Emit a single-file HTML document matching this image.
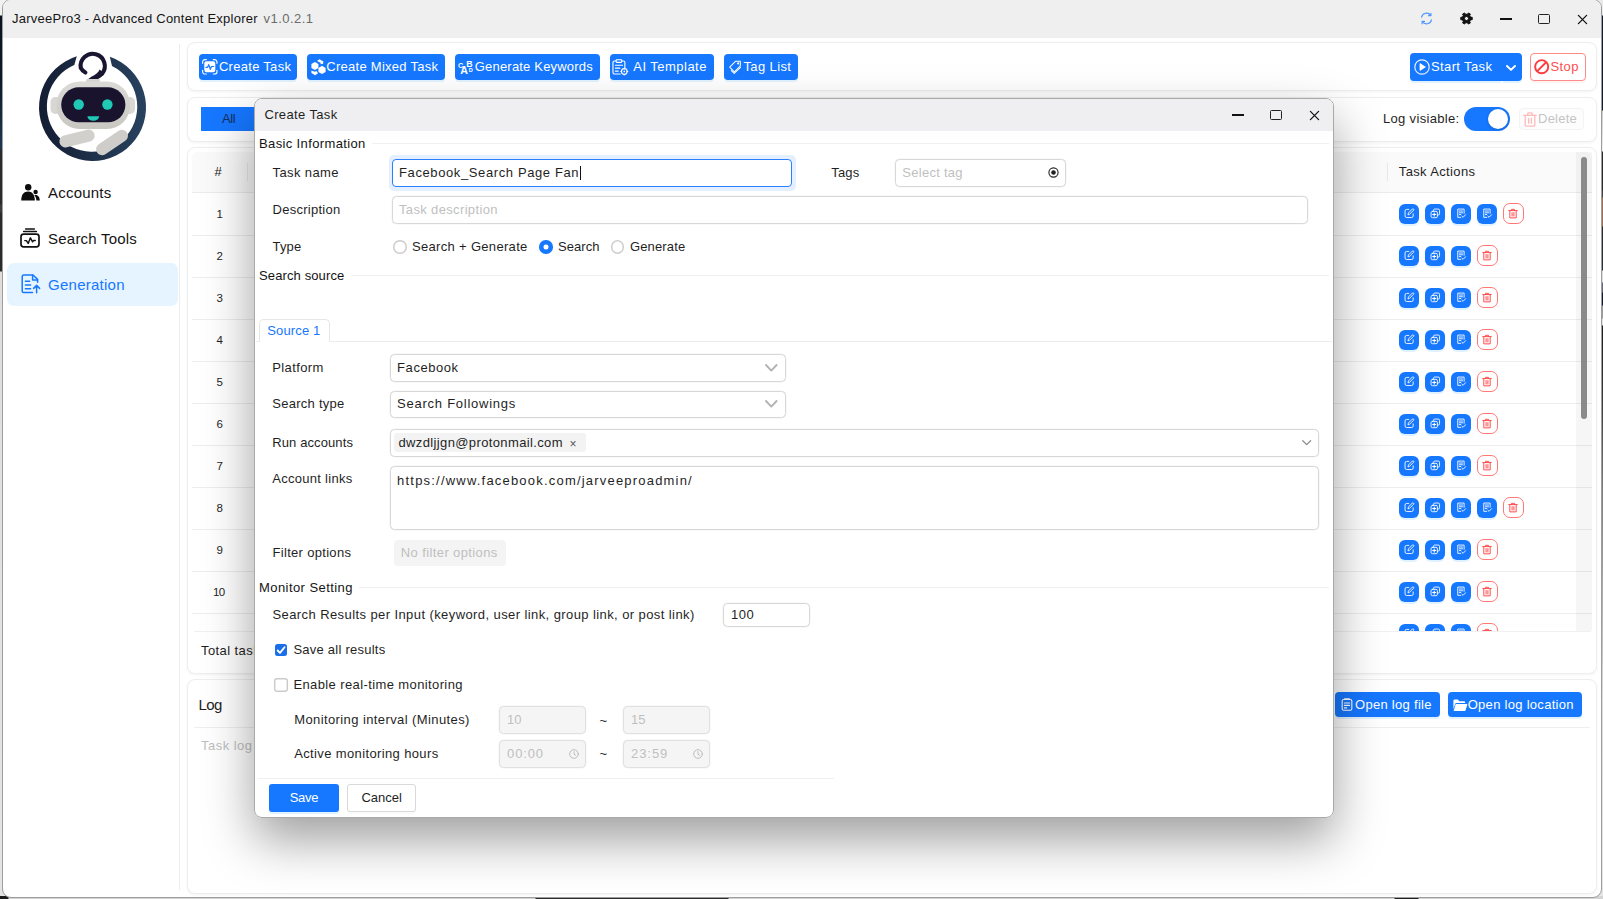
<!DOCTYPE html>
<html lang="en">
<head>
<meta charset="utf-8">
<title>JarveePro3 - Advanced Content Explorer</title>
<style>
*{box-sizing:border-box;margin:0;padding:0}
html,body{width:1603px;height:899px;overflow:hidden;background:#e4e4e4}
body{position:relative;font-family:"Liberation Sans",sans-serif;font-size:13px;color:#1f1f1f}
.a{position:absolute}
.t{position:absolute;white-space:nowrap;line-height:16px}
svg{position:absolute;overflow:visible}
.panel{position:absolute;background:#fff;border:1px solid #eeeeee;border-radius:8px;box-shadow:0 1px 3px rgba(0,0,0,.05)}
.btn{position:absolute;border-radius:4px;background:#1677ff;box-shadow:0 2px 0 rgba(5,145,255,.12)}
.ib{position:absolute;width:20px;height:20px;border-radius:6px;background:#1677ff;box-shadow:0 2px 0 rgba(5,145,255,.12)}
.ibd{position:absolute;width:21px;height:21px;border-radius:7px;background:#fff;border:1px solid #ff7875}
.ln{position:absolute;height:1px;background:#f0f0f0}
.inp{position:absolute;border:1px solid #d8d8d8;border-radius:4.5px;background:#fff;box-shadow:0 0 0 .5px rgba(0,0,0,.05)}
.dis{background:#f5f5f5;border-color:#e0e0e0}
</style>
</head>
<body>
<div class="a" style="left:0;top:0;width:6px;height:899px;background:linear-gradient(#f1f1f1 0,#f1f1f1 15px,#0a131f 16px,#0d1a2b 80px,#1d3852 148px,#2b2b2b 150px,#2b2b2b 204px,#3c3c3c 205px,#3c3c3c 212px,#2b2b2b 213px,#2b2b2b 271px,#dedede 272px,#e4e4e4 899px)">
</div>
<div class="a" style="left:1597px;top:0;width:6px;height:899px;background:linear-gradient(#e8e8e8 0,#e8e8e8 15px,#131b2a 16px,#131b2a 110px,#c8c8c8 111px,#f2f2f2 151px,#2b2b2b 152px,#2b2b2b 190px,#444 191px,#444 197px,#9c6d57 198px,#9c6d57 226px,#2b2b2b 227px,#2a3038 270px,#dcdcdc 271px,#dcdcdc 282px,#666677 283px,#666677 292px,#15152a 293px,#15152a 305px,#999 306px,#999 318px,#e0e0e0 319px,#e0e0e0 325px,#1e1e1e 326px,#3a3a3a 400px,#777 480px,#dcdcdc 700px,#e6e6e6 899px)">
</div>
<div class="a" style="left:0;top:896px;width:1603px;height:3px;background:linear-gradient(90deg,#1c1c1c 0,#1c1c1c 8px,#d4d4d4 9px,#d4d4d4 535px,#2a2a2a 536px,#2a2a2a 728px,#d4d4d4 729px,#d4d4d4 1394px,#222 1395px,#222 1418px,#d4d4d4 1419px,#d4d4d4 1603px)">
</div>
<div class="a" style="left:2px;top:-1px;width:1600px;height:899px;background:#fff;border:1px solid #9d9d9d;border-radius:9px;overflow:hidden">
<div class="a" style="left:0;top:0;width:1600px;height:38px;background:#efefef">
</div>
</div>
<svg style="left:1420px;top:12px" width="13" height="13" viewBox="0 0 13 13" fill="none" stroke="#4d97ff" stroke-width="1.15" stroke-linecap="round" stroke-linejoin="round">
<path d="M1.6 5.2A5 5 0 0 1 10.6 3.3"/>
<path d="M11.4 7.8A5 5 0 0 1 2.4 9.7"/>
<path d="M10.9 1.2V3.6H8.5"/>
<path d="M2.1 11.8V9.4H4.5"/>
</svg>
<svg style="left:1460.3px;top:12.2px" width="13" height="13" viewBox="0 0 13 13">
<path d="M10.57,5.11L12.28,5.33L12.28,7.67L10.57,7.89L9.74,9.33L10.41,10.92L8.38,12.09L7.33,10.72L5.67,10.72L4.62,12.09L2.59,10.92L3.26,9.33L2.43,7.89L0.72,7.67L0.72,5.33L2.43,5.11L3.26,3.67L2.59,2.08L4.62,0.91L5.67,2.28L7.33,2.28L8.38,0.91L10.41,2.08L9.74,3.67Z M8.5 6.5A2 2 0 1 0 4.5 6.5A2 2 0 1 0 8.5 6.5Z" fill="#111" fill-rule="evenodd" stroke="#111" stroke-width=".9" stroke-linejoin="round"/>
</svg>
<div class="a" style="left:1500px;top:18px;width:12px;height:2px;background:#111">
</div>
<div class="a" style="left:1538.3px;top:14.4px;width:11.6px;height:9.4px;border:1.4px solid #222;border-radius:1.5px">
</div>
<svg style="left:1577.5px;top:14.7px" width="9" height="9" viewBox="0 0 9 9" stroke="#111" stroke-width="1.3" stroke-linecap="round">
<path d="M.4.4L8.6 8.6M8.6.4L.4 8.6"/>
</svg>
<div class="a" style="left:179px;top:44px;width:1px;height:846px;background:#ededed">
</div>
<div class="a" style="left:7px;top:263px;width:171px;height:43px;border-radius:7px;background:#e6f4ff">
</div>
<svg style="left:30px;top:45px" width="125" height="125" viewBox="0 0 125 125">
<defs>
<linearGradient id="rg" x1="0" x2="1" y1="0" y2="0">
<stop offset="0" stop-color="#131d33"/>
<stop offset="1" stop-color="#28425f"/>
</linearGradient>
<linearGradient id="hg" x1="0" x2="0" y1="0" y2="1">
<stop offset="0" stop-color="#dcdad6"/>
<stop offset="1" stop-color="#c9c7c2"/>
</linearGradient>
</defs>
<path d="M46.8 11.3A53.5 53.5 0 1 0 79.8 11.8L82 21A45.2 45.2 0 1 1 44.3 20Z" fill="url(#rg)"/>
<path d="M55.4 27.5Q52.3 25.8 50.8 23.05A12.1 12.1 0 1 1 71.97 28.73" fill="none" stroke="#1a1530" stroke-width="4.1" stroke-linecap="round"/>
<path d="M69.6 24.6C67.5 29.5 63 30.5 58.3 33.9L68 34C70.5 32.8 73 31 74.4 28.8Z" fill="#1a1530"/>
<rect x="56.2" y="33.9" width="13.6" height="5" rx="1" fill="#d5d3cf"/>
<rect x="20.5" y="52" width="11" height="17" rx="5" fill="#d9d7d3"/>
<rect x="94" y="52" width="11" height="17" rx="5" fill="#d9d7d3"/>
<rect x="26.5" y="36.5" width="73.5" height="47.5" rx="23" fill="url(#hg)"/>
<rect x="31.2" y="42.3" width="64.2" height="35" rx="17.5" fill="#19132e"/>
<circle cx="48.7" cy="59.5" r="5.2" fill="#1fc9b5"/>
<circle cx="77.4" cy="59.5" r="5.2" fill="#1fc9b5"/>
<path d="M57.4 71.2H69.2A5.9 4.6 0 0 1 57.4 71.2Z" fill="#1fc9b5"/>
<rect x="29" y="87.5" width="36" height="12" rx="6" fill="#d2d0cc" transform="rotate(-14 47 93.5)"/>
<rect x="64" y="91.5" width="36" height="12" rx="6" fill="#cfcdc9" transform="rotate(-34 82 97.5)"/>
</svg>
<svg style="left:20.5px;top:183.5px" width="19" height="17" viewBox="0 0 19 17" fill="#0d0d0d">
<circle cx="7.2" cy="3.3" r="3.2"/>
<path d="M0.2 16.6C0.2 10.8 2.8 7.6 7.2 7.6C11.2 7.6 13.6 10.6 13.9 16.6Z"/>
<circle cx="14.6" cy="8" r="2.2"/>
<path d="M13.2 11.2C16.6 10.2 18.7 12.6 18.8 16.6H15.4C15.3 14.2 14.6 12.4 13.2 11.2Z"/>
</svg>
<svg style="left:20px;top:228px" width="20" height="20" viewBox="0 0 20 20" fill="none" stroke="#111" stroke-linecap="round" stroke-linejoin="round">
<path d="M5.6 1H14.4" stroke-width="1.5"/>
<path d="M3.6 3.5H16.4" stroke-width="1.5"/>
<rect x="1" y="6.1" width="18" height="12.8" rx="2.6" stroke-width="1.7"/>
<path d="M4.8 12.6H6.4L8.2 15.4L10.4 9.8L12.6 13.8L13.6 12.4H15.2" stroke-width="1.45"/>
</svg>
<svg style="left:20.5px;top:274.2px" width="20" height="20" viewBox="0 0 20 20" fill="none" stroke="#1677ff" stroke-width="1.5" stroke-linecap="round" stroke-linejoin="round">
<path d="M11.5 18.6H2.6A1.4 1.4 0 0 1 1.2 17.2V2.4A1.4 1.4 0 0 1 2.6 1H12L16.6 5.4V8.2"/>
<path d="M11.6 1.2V6H16.4"/>
<path d="M4.4 7.2H8.6M4.4 11H9.6M4.4 14.8H9.6"/>
<path d="M15.6 18.8V11.6M12.6 14.4L15.6 11.4L18.6 14.4"/>
</svg>
<div class="panel" style="left:187px;top:42px;width:1410px;height:49px">
</div>
<div class="btn" style="left:199px;top:54px;width:98px;height:26px">
</div>
<div class="btn" style="left:307px;top:54px;width:138px;height:26px">
</div>
<div class="btn" style="left:455px;top:54px;width:145px;height:26px">
</div>
<div class="btn" style="left:610px;top:54px;width:104px;height:26px">
</div>
<div class="btn" style="left:724px;top:54px;width:74px;height:26px">
</div>
<svg style="left:202.2px;top:59px" width="15.6" height="15.6" viewBox="0 0 15 15" stroke="#fff" fill="none" stroke-linecap="round" stroke-linejoin="round" stroke-width="1.1">
<rect x="2.2" y="2.2" width="10.6" height="10.6" rx="2.2" fill="#fff" stroke="none"/>
<path d="M.6 4.2V2.8A2.2 2.2 0 0 1 2.8.6H4.2M10.8.6H12.2A2.2 2.2 0 0 1 14.4 2.8V4.2M14.4 10.8V12.2A2.2 2.2 0 0 1 12.2 14.4H10.8M4.2 14.4H2.8A2.2 2.2 0 0 1 .6 12.2V10.8"/>
<path d="M3.8 8H5.4L6.5 5.4L8 10L9.1 7.2H11.2" stroke="#1677ff" stroke-width="1.15"/>
</svg>
<svg style="left:310.5px;top:58.8px" width="15" height="17" viewBox="0 0 15 17" fill="#fff">
<path d="M3.9 3L7.4 5V9.1L3.9 11.1L.4 9.1V5Z"/>
<path d="M11 6.8L14.6 8.9V13L11 15.1L7.4 13V8.9Z"/>
<path d="M6.05 2L8.5.26L12.4 2.43L12.1 4.74L9.95 5.17L9.37 3.87Z"/>
<path d="M.41 11.38L3.88 12.83L5.47 12.1L7.06 14.27L4.17 16.15L.41 13.98Z"/>
</svg>
<svg style="left:457.4px;top:58px" width="17" height="18" viewBox="0 0 17 18" fill="#fff" font-family="Liberation Sans, sans-serif" font-weight="bold">
<text x="1" y="10.2" font-size="7.2">C</text>
<text x="9.2" y="9" font-size="8.8">B</text>
<text x="3.2" y="16" font-size="10.6">A</text>
<text x="11.8" y="14.2" font-size="5.6">D</text>
</svg>
<svg style="left:612.4px;top:58.8px" width="16.6" height="16.6" viewBox="0 0 17 17" fill="none" stroke="#fff" stroke-width="1.15" stroke-linecap="round" stroke-linejoin="round">
<path d="M8.4 15.4H2.6A1.6 1.6 0 0 1 1 13.8V3.6A1.6 1.6 0 0 1 2.6 2H4.2M10 2H11.6A1.6 1.6 0 0 1 13.2 3.6V8.6"/>
<rect x="4.2" y=".8" width="5.8" height="2.6" rx=".8"/>
<path d="M3.4 6.4H10.8M3.4 9.4H8M3.4 12.4H6.4"/>
<circle cx="12.6" cy="12.8" r="2.9"/>
<circle cx="12.6" cy="12.8" r=".9" fill="#fff" stroke="none"/>
<path d="M12.6 9.2V9.9M12.6 15.7V16.4M9 12.8H9.7M15.5 12.8H16.2"/>
</svg>
<svg style="left:729px;top:59.6px" width="12.6" height="14.4" viewBox="0 0 14 15" fill="none" stroke="#fff" stroke-width="1.15" stroke-linecap="round" stroke-linejoin="round">
<path d="M7.4.8H12.6V6L6 12.6L.8 7.4Z"/>
<circle cx="10.2" cy="3.3" r=".6" fill="#fff"/>
<path d="M2.6 11.2L5.8 14.4L12.8 7.6"/>
</svg>
<div class="btn" style="left:1410px;top:53px;width:112px;height:28px">
</div>
<div class="a" style="left:1500.5px;top:81px;width:2px;height:2px;background:#fff">
</div>
<svg style="left:1414.2px;top:59.2px" width="16" height="16" viewBox="0 0 16 16" fill="none" stroke="#fff" stroke-width="1.2">
<circle cx="8" cy="8" r="7.2" stroke-opacity=".9"/>
<rect x="3.4" y="3.4" width="9.2" height="9.2" rx="2.6" stroke="none"/>
<path d="M6 4.6L11.4 8L6 11.4Z" fill="#fff" stroke="#fff" stroke-linejoin="round" stroke-width=".8"/>
</svg>
<svg style="left:1506.2px;top:64.6px" width="10" height="6" viewBox="0 0 10 6" fill="none" stroke="#fff" stroke-width="2" stroke-linecap="round" stroke-linejoin="round">
<path d="M1 1L5 4.9L9 1"/>
</svg>
<div class="a" style="left:1530.4px;top:53.3px;width:55.4px;height:27.4px;border:1px solid #ff8a8a;border-radius:4px;background:#fff;box-shadow:0 2px 0 rgba(255,38,5,.05)">
</div>
<svg style="left:1534px;top:59.2px" width="15.4" height="15.4" viewBox="0 0 16 16" fill="none" stroke="#ff3b3f" stroke-width="2">
<circle cx="8" cy="8" r="6.8"/>
<path d="M3.4 12.6L12.6 3.4"/>
</svg>
<div class="panel" style="left:187px;top:96.5px;width:1410px;height:45px">
</div>
<div class="a" style="left:201px;top:107px;width:70px;height:24px;background:#1677ff">
</div>
<div class="a" style="left:1464px;top:107px;width:46px;height:24px;border-radius:12px;background:#1677ff">
</div>
<div class="a" style="left:1487.8px;top:108.8px;width:20.4px;height:20.4px;border-radius:50%;background:#fff;box-shadow:0 1px 3px rgba(0,35,11,.2)">
</div>
<div class="a" style="left:1518.5px;top:108px;width:65.5px;height:22px;border:1px solid #f3f3f3;border-radius:4px;background:#fdfdfd">
</div>
<svg style="left:1523.3px;top:111.5px" width="14" height="15" viewBox="0 0 14 15" fill="none" stroke="#ffb9ba" stroke-width="1.3" stroke-linecap="round" stroke-linejoin="round">
<path d="M.8 3.4H13.2M4.8 3.2V1.6A.8.8 0 0 1 5.6.8H8.4A.8.8 0 0 1 9.2 1.6V3.2M2.2 3.6V13A1.2 1.2 0 0 0 3.4 14.2H10.6A1.2 1.2 0 0 0 11.8 13V3.6M5.6 6.4V11.2M8.4 6.4V11.2"/>
</svg>
<div class="panel" style="left:187px;top:146.5px;width:1410px;height:527px">
</div>
<div class="a" style="left:192px;top:152px;width:1400px;height:479px;overflow:hidden">
<div class="a" style="left:0;top:0;width:1400px;height:41px;background:#fafafa;border-bottom:1px solid #ececec;border-radius:6px 6px 0 0">
</div>
<div class="a" style="left:55px;top:11px;width:1px;height:18px;background:#e9e9e9">
</div>
<div class="a" style="left:1194.5px;top:11px;width:1px;height:18px;background:#e9e9e9">
</div>
<div class="ln" style="left:0;top:82.5px;width:1400px;background:#ededed">
</div>
<div class="ib" style="left:1207px;top:51.5px">
<svg style="left:4.7px;top:4.7px" width="10.6" height="10.6" viewBox="0 0 12 12" fill="none" stroke="#fff" stroke-width="1" stroke-linecap="round" stroke-linejoin="round">
<path d="M5.4 1.6H3A1.8 1.8 0 0 0 1.2 3.4V9A1.8 1.8 0 0 0 3 10.8H8.6A1.8 1.8 0 0 0 10.4 9V6.6"/>
<path d="M4.6 7.4L5 5.6L9.4 1.2A.9.9 0 0 1 10.8 2.6L6.4 7Z"/>
</svg>
</div>
<div class="ib" style="left:1233px;top:51.5px">
<svg style="left:4.7px;top:4.7px" width="10.6" height="10.6" viewBox="0 0 12 12" fill="none" stroke="#fff" stroke-width="1" stroke-linecap="round" stroke-linejoin="round">
<path d="M4 3.4V2.6A1.4 1.4 0 0 1 5.4 1.2H9.4A1.4 1.4 0 0 1 10.8 2.6V6.6A1.4 1.4 0 0 1 9.4 8H8.8"/>
<rect x="1.2" y="3.8" width="7.2" height="7.2" rx="1.6"/>
<path d="M4.8 5.6V9.2M3 7.4H6.6" stroke-width="1.2"/>
</svg>
</div>
<div class="ib" style="left:1259px;top:51.5px">
<svg style="left:4.9px;top:4.7px" width="10.6" height="10.6" viewBox="0 0 12 12" fill="none" stroke="#fff" stroke-width="1" stroke-linecap="round" stroke-linejoin="round">
<path d="M5.4 10.6H2V1.2H9.2V6"/>
<path d="M3.8 3.4H7.4M3.8 5.4H7.4M3.8 7.4H5.4"/>
<path d="M6.6 9.2L8 10.6L10.8 7.6"/>
</svg>
</div>
<div class="ib" style="left:1285px;top:51.5px">
<svg style="left:4.9px;top:4.7px" width="10.6" height="10.6" viewBox="0 0 12 12" fill="none" stroke="#fff" stroke-width="1" stroke-linecap="round" stroke-linejoin="round">
<path d="M5.4 10.6H2V1.2H9.2V6"/>
<path d="M3.8 3.4H7.4M3.8 5.4H7.4M3.8 7.4H5.4"/>
<path d="M6.6 9.2L8 10.6L10.8 7.6"/>
</svg>
</div>
<div class="ibd" style="left:1310.5px;top:51.0px">
<svg style="left:4.7px;top:4.2px" width="10" height="11" viewBox="0 0 11 12" fill="none" stroke="#ff4d4f" stroke-width="1.1" stroke-linecap="round" stroke-linejoin="round">
<path d="M.8 2.8H10.2M3.8 2.6V1.4H7.2V2.6M2 3V10.8H9V3"/>
<path d="M4.5 5V8.8M6.5 5V8.8"/>
</svg>
</div>
<div class="ln" style="left:0;top:124.5px;width:1400px;background:#ededed">
</div>
<div class="ib" style="left:1207px;top:93.5px">
<svg style="left:4.7px;top:4.7px" width="10.6" height="10.6" viewBox="0 0 12 12" fill="none" stroke="#fff" stroke-width="1" stroke-linecap="round" stroke-linejoin="round">
<path d="M5.4 1.6H3A1.8 1.8 0 0 0 1.2 3.4V9A1.8 1.8 0 0 0 3 10.8H8.6A1.8 1.8 0 0 0 10.4 9V6.6"/>
<path d="M4.6 7.4L5 5.6L9.4 1.2A.9.9 0 0 1 10.8 2.6L6.4 7Z"/>
</svg>
</div>
<div class="ib" style="left:1233px;top:93.5px">
<svg style="left:4.7px;top:4.7px" width="10.6" height="10.6" viewBox="0 0 12 12" fill="none" stroke="#fff" stroke-width="1" stroke-linecap="round" stroke-linejoin="round">
<path d="M4 3.4V2.6A1.4 1.4 0 0 1 5.4 1.2H9.4A1.4 1.4 0 0 1 10.8 2.6V6.6A1.4 1.4 0 0 1 9.4 8H8.8"/>
<rect x="1.2" y="3.8" width="7.2" height="7.2" rx="1.6"/>
<path d="M4.8 5.6V9.2M3 7.4H6.6" stroke-width="1.2"/>
</svg>
</div>
<div class="ib" style="left:1259px;top:93.5px">
<svg style="left:4.9px;top:4.7px" width="10.6" height="10.6" viewBox="0 0 12 12" fill="none" stroke="#fff" stroke-width="1" stroke-linecap="round" stroke-linejoin="round">
<path d="M5.4 10.6H2V1.2H9.2V6"/>
<path d="M3.8 3.4H7.4M3.8 5.4H7.4M3.8 7.4H5.4"/>
<path d="M6.6 9.2L8 10.6L10.8 7.6"/>
</svg>
</div>
<div class="ibd" style="left:1284.5px;top:93.0px">
<svg style="left:4.7px;top:4.2px" width="10" height="11" viewBox="0 0 11 12" fill="none" stroke="#ff4d4f" stroke-width="1.1" stroke-linecap="round" stroke-linejoin="round">
<path d="M.8 2.8H10.2M3.8 2.6V1.4H7.2V2.6M2 3V10.8H9V3"/>
<path d="M4.5 5V8.8M6.5 5V8.8"/>
</svg>
</div>
<div class="ln" style="left:0;top:166.5px;width:1400px;background:#ededed">
</div>
<div class="ib" style="left:1207px;top:135.5px">
<svg style="left:4.7px;top:4.7px" width="10.6" height="10.6" viewBox="0 0 12 12" fill="none" stroke="#fff" stroke-width="1" stroke-linecap="round" stroke-linejoin="round">
<path d="M5.4 1.6H3A1.8 1.8 0 0 0 1.2 3.4V9A1.8 1.8 0 0 0 3 10.8H8.6A1.8 1.8 0 0 0 10.4 9V6.6"/>
<path d="M4.6 7.4L5 5.6L9.4 1.2A.9.9 0 0 1 10.8 2.6L6.4 7Z"/>
</svg>
</div>
<div class="ib" style="left:1233px;top:135.5px">
<svg style="left:4.7px;top:4.7px" width="10.6" height="10.6" viewBox="0 0 12 12" fill="none" stroke="#fff" stroke-width="1" stroke-linecap="round" stroke-linejoin="round">
<path d="M4 3.4V2.6A1.4 1.4 0 0 1 5.4 1.2H9.4A1.4 1.4 0 0 1 10.8 2.6V6.6A1.4 1.4 0 0 1 9.4 8H8.8"/>
<rect x="1.2" y="3.8" width="7.2" height="7.2" rx="1.6"/>
<path d="M4.8 5.6V9.2M3 7.4H6.6" stroke-width="1.2"/>
</svg>
</div>
<div class="ib" style="left:1259px;top:135.5px">
<svg style="left:4.9px;top:4.7px" width="10.6" height="10.6" viewBox="0 0 12 12" fill="none" stroke="#fff" stroke-width="1" stroke-linecap="round" stroke-linejoin="round">
<path d="M5.4 10.6H2V1.2H9.2V6"/>
<path d="M3.8 3.4H7.4M3.8 5.4H7.4M3.8 7.4H5.4"/>
<path d="M6.6 9.2L8 10.6L10.8 7.6"/>
</svg>
</div>
<div class="ibd" style="left:1284.5px;top:135.0px">
<svg style="left:4.7px;top:4.2px" width="10" height="11" viewBox="0 0 11 12" fill="none" stroke="#ff4d4f" stroke-width="1.1" stroke-linecap="round" stroke-linejoin="round">
<path d="M.8 2.8H10.2M3.8 2.6V1.4H7.2V2.6M2 3V10.8H9V3"/>
<path d="M4.5 5V8.8M6.5 5V8.8"/>
</svg>
</div>
<div class="ln" style="left:0;top:208.5px;width:1400px;background:#ededed">
</div>
<div class="ib" style="left:1207px;top:177.5px">
<svg style="left:4.7px;top:4.7px" width="10.6" height="10.6" viewBox="0 0 12 12" fill="none" stroke="#fff" stroke-width="1" stroke-linecap="round" stroke-linejoin="round">
<path d="M5.4 1.6H3A1.8 1.8 0 0 0 1.2 3.4V9A1.8 1.8 0 0 0 3 10.8H8.6A1.8 1.8 0 0 0 10.4 9V6.6"/>
<path d="M4.6 7.4L5 5.6L9.4 1.2A.9.9 0 0 1 10.8 2.6L6.4 7Z"/>
</svg>
</div>
<div class="ib" style="left:1233px;top:177.5px">
<svg style="left:4.7px;top:4.7px" width="10.6" height="10.6" viewBox="0 0 12 12" fill="none" stroke="#fff" stroke-width="1" stroke-linecap="round" stroke-linejoin="round">
<path d="M4 3.4V2.6A1.4 1.4 0 0 1 5.4 1.2H9.4A1.4 1.4 0 0 1 10.8 2.6V6.6A1.4 1.4 0 0 1 9.4 8H8.8"/>
<rect x="1.2" y="3.8" width="7.2" height="7.2" rx="1.6"/>
<path d="M4.8 5.6V9.2M3 7.4H6.6" stroke-width="1.2"/>
</svg>
</div>
<div class="ib" style="left:1259px;top:177.5px">
<svg style="left:4.9px;top:4.7px" width="10.6" height="10.6" viewBox="0 0 12 12" fill="none" stroke="#fff" stroke-width="1" stroke-linecap="round" stroke-linejoin="round">
<path d="M5.4 10.6H2V1.2H9.2V6"/>
<path d="M3.8 3.4H7.4M3.8 5.4H7.4M3.8 7.4H5.4"/>
<path d="M6.6 9.2L8 10.6L10.8 7.6"/>
</svg>
</div>
<div class="ibd" style="left:1284.5px;top:177.0px">
<svg style="left:4.7px;top:4.2px" width="10" height="11" viewBox="0 0 11 12" fill="none" stroke="#ff4d4f" stroke-width="1.1" stroke-linecap="round" stroke-linejoin="round">
<path d="M.8 2.8H10.2M3.8 2.6V1.4H7.2V2.6M2 3V10.8H9V3"/>
<path d="M4.5 5V8.8M6.5 5V8.8"/>
</svg>
</div>
<div class="ln" style="left:0;top:250.5px;width:1400px;background:#ededed">
</div>
<div class="ib" style="left:1207px;top:219.5px">
<svg style="left:4.7px;top:4.7px" width="10.6" height="10.6" viewBox="0 0 12 12" fill="none" stroke="#fff" stroke-width="1" stroke-linecap="round" stroke-linejoin="round">
<path d="M5.4 1.6H3A1.8 1.8 0 0 0 1.2 3.4V9A1.8 1.8 0 0 0 3 10.8H8.6A1.8 1.8 0 0 0 10.4 9V6.6"/>
<path d="M4.6 7.4L5 5.6L9.4 1.2A.9.9 0 0 1 10.8 2.6L6.4 7Z"/>
</svg>
</div>
<div class="ib" style="left:1233px;top:219.5px">
<svg style="left:4.7px;top:4.7px" width="10.6" height="10.6" viewBox="0 0 12 12" fill="none" stroke="#fff" stroke-width="1" stroke-linecap="round" stroke-linejoin="round">
<path d="M4 3.4V2.6A1.4 1.4 0 0 1 5.4 1.2H9.4A1.4 1.4 0 0 1 10.8 2.6V6.6A1.4 1.4 0 0 1 9.4 8H8.8"/>
<rect x="1.2" y="3.8" width="7.2" height="7.2" rx="1.6"/>
<path d="M4.8 5.6V9.2M3 7.4H6.6" stroke-width="1.2"/>
</svg>
</div>
<div class="ib" style="left:1259px;top:219.5px">
<svg style="left:4.9px;top:4.7px" width="10.6" height="10.6" viewBox="0 0 12 12" fill="none" stroke="#fff" stroke-width="1" stroke-linecap="round" stroke-linejoin="round">
<path d="M5.4 10.6H2V1.2H9.2V6"/>
<path d="M3.8 3.4H7.4M3.8 5.4H7.4M3.8 7.4H5.4"/>
<path d="M6.6 9.2L8 10.6L10.8 7.6"/>
</svg>
</div>
<div class="ibd" style="left:1284.5px;top:219.0px">
<svg style="left:4.7px;top:4.2px" width="10" height="11" viewBox="0 0 11 12" fill="none" stroke="#ff4d4f" stroke-width="1.1" stroke-linecap="round" stroke-linejoin="round">
<path d="M.8 2.8H10.2M3.8 2.6V1.4H7.2V2.6M2 3V10.8H9V3"/>
<path d="M4.5 5V8.8M6.5 5V8.8"/>
</svg>
</div>
<div class="ln" style="left:0;top:292.5px;width:1400px;background:#ededed">
</div>
<div class="ib" style="left:1207px;top:261.5px">
<svg style="left:4.7px;top:4.7px" width="10.6" height="10.6" viewBox="0 0 12 12" fill="none" stroke="#fff" stroke-width="1" stroke-linecap="round" stroke-linejoin="round">
<path d="M5.4 1.6H3A1.8 1.8 0 0 0 1.2 3.4V9A1.8 1.8 0 0 0 3 10.8H8.6A1.8 1.8 0 0 0 10.4 9V6.6"/>
<path d="M4.6 7.4L5 5.6L9.4 1.2A.9.9 0 0 1 10.8 2.6L6.4 7Z"/>
</svg>
</div>
<div class="ib" style="left:1233px;top:261.5px">
<svg style="left:4.7px;top:4.7px" width="10.6" height="10.6" viewBox="0 0 12 12" fill="none" stroke="#fff" stroke-width="1" stroke-linecap="round" stroke-linejoin="round">
<path d="M4 3.4V2.6A1.4 1.4 0 0 1 5.4 1.2H9.4A1.4 1.4 0 0 1 10.8 2.6V6.6A1.4 1.4 0 0 1 9.4 8H8.8"/>
<rect x="1.2" y="3.8" width="7.2" height="7.2" rx="1.6"/>
<path d="M4.8 5.6V9.2M3 7.4H6.6" stroke-width="1.2"/>
</svg>
</div>
<div class="ib" style="left:1259px;top:261.5px">
<svg style="left:4.9px;top:4.7px" width="10.6" height="10.6" viewBox="0 0 12 12" fill="none" stroke="#fff" stroke-width="1" stroke-linecap="round" stroke-linejoin="round">
<path d="M5.4 10.6H2V1.2H9.2V6"/>
<path d="M3.8 3.4H7.4M3.8 5.4H7.4M3.8 7.4H5.4"/>
<path d="M6.6 9.2L8 10.6L10.8 7.6"/>
</svg>
</div>
<div class="ibd" style="left:1284.5px;top:261.0px">
<svg style="left:4.7px;top:4.2px" width="10" height="11" viewBox="0 0 11 12" fill="none" stroke="#ff4d4f" stroke-width="1.1" stroke-linecap="round" stroke-linejoin="round">
<path d="M.8 2.8H10.2M3.8 2.6V1.4H7.2V2.6M2 3V10.8H9V3"/>
<path d="M4.5 5V8.8M6.5 5V8.8"/>
</svg>
</div>
<div class="ln" style="left:0;top:334.5px;width:1400px;background:#ededed">
</div>
<div class="ib" style="left:1207px;top:303.5px">
<svg style="left:4.7px;top:4.7px" width="10.6" height="10.6" viewBox="0 0 12 12" fill="none" stroke="#fff" stroke-width="1" stroke-linecap="round" stroke-linejoin="round">
<path d="M5.4 1.6H3A1.8 1.8 0 0 0 1.2 3.4V9A1.8 1.8 0 0 0 3 10.8H8.6A1.8 1.8 0 0 0 10.4 9V6.6"/>
<path d="M4.6 7.4L5 5.6L9.4 1.2A.9.9 0 0 1 10.8 2.6L6.4 7Z"/>
</svg>
</div>
<div class="ib" style="left:1233px;top:303.5px">
<svg style="left:4.7px;top:4.7px" width="10.6" height="10.6" viewBox="0 0 12 12" fill="none" stroke="#fff" stroke-width="1" stroke-linecap="round" stroke-linejoin="round">
<path d="M4 3.4V2.6A1.4 1.4 0 0 1 5.4 1.2H9.4A1.4 1.4 0 0 1 10.8 2.6V6.6A1.4 1.4 0 0 1 9.4 8H8.8"/>
<rect x="1.2" y="3.8" width="7.2" height="7.2" rx="1.6"/>
<path d="M4.8 5.6V9.2M3 7.4H6.6" stroke-width="1.2"/>
</svg>
</div>
<div class="ib" style="left:1259px;top:303.5px">
<svg style="left:4.9px;top:4.7px" width="10.6" height="10.6" viewBox="0 0 12 12" fill="none" stroke="#fff" stroke-width="1" stroke-linecap="round" stroke-linejoin="round">
<path d="M5.4 10.6H2V1.2H9.2V6"/>
<path d="M3.8 3.4H7.4M3.8 5.4H7.4M3.8 7.4H5.4"/>
<path d="M6.6 9.2L8 10.6L10.8 7.6"/>
</svg>
</div>
<div class="ibd" style="left:1284.5px;top:303.0px">
<svg style="left:4.7px;top:4.2px" width="10" height="11" viewBox="0 0 11 12" fill="none" stroke="#ff4d4f" stroke-width="1.1" stroke-linecap="round" stroke-linejoin="round">
<path d="M.8 2.8H10.2M3.8 2.6V1.4H7.2V2.6M2 3V10.8H9V3"/>
<path d="M4.5 5V8.8M6.5 5V8.8"/>
</svg>
</div>
<div class="ln" style="left:0;top:376.5px;width:1400px;background:#ededed">
</div>
<div class="ib" style="left:1207px;top:345.5px">
<svg style="left:4.7px;top:4.7px" width="10.6" height="10.6" viewBox="0 0 12 12" fill="none" stroke="#fff" stroke-width="1" stroke-linecap="round" stroke-linejoin="round">
<path d="M5.4 1.6H3A1.8 1.8 0 0 0 1.2 3.4V9A1.8 1.8 0 0 0 3 10.8H8.6A1.8 1.8 0 0 0 10.4 9V6.6"/>
<path d="M4.6 7.4L5 5.6L9.4 1.2A.9.9 0 0 1 10.8 2.6L6.4 7Z"/>
</svg>
</div>
<div class="ib" style="left:1233px;top:345.5px">
<svg style="left:4.7px;top:4.7px" width="10.6" height="10.6" viewBox="0 0 12 12" fill="none" stroke="#fff" stroke-width="1" stroke-linecap="round" stroke-linejoin="round">
<path d="M4 3.4V2.6A1.4 1.4 0 0 1 5.4 1.2H9.4A1.4 1.4 0 0 1 10.8 2.6V6.6A1.4 1.4 0 0 1 9.4 8H8.8"/>
<rect x="1.2" y="3.8" width="7.2" height="7.2" rx="1.6"/>
<path d="M4.8 5.6V9.2M3 7.4H6.6" stroke-width="1.2"/>
</svg>
</div>
<div class="ib" style="left:1259px;top:345.5px">
<svg style="left:4.9px;top:4.7px" width="10.6" height="10.6" viewBox="0 0 12 12" fill="none" stroke="#fff" stroke-width="1" stroke-linecap="round" stroke-linejoin="round">
<path d="M5.4 10.6H2V1.2H9.2V6"/>
<path d="M3.8 3.4H7.4M3.8 5.4H7.4M3.8 7.4H5.4"/>
<path d="M6.6 9.2L8 10.6L10.8 7.6"/>
</svg>
</div>
<div class="ib" style="left:1285px;top:345.5px">
<svg style="left:4.9px;top:4.7px" width="10.6" height="10.6" viewBox="0 0 12 12" fill="none" stroke="#fff" stroke-width="1" stroke-linecap="round" stroke-linejoin="round">
<path d="M5.4 10.6H2V1.2H9.2V6"/>
<path d="M3.8 3.4H7.4M3.8 5.4H7.4M3.8 7.4H5.4"/>
<path d="M6.6 9.2L8 10.6L10.8 7.6"/>
</svg>
</div>
<div class="ibd" style="left:1310.5px;top:345.0px">
<svg style="left:4.7px;top:4.2px" width="10" height="11" viewBox="0 0 11 12" fill="none" stroke="#ff4d4f" stroke-width="1.1" stroke-linecap="round" stroke-linejoin="round">
<path d="M.8 2.8H10.2M3.8 2.6V1.4H7.2V2.6M2 3V10.8H9V3"/>
<path d="M4.5 5V8.8M6.5 5V8.8"/>
</svg>
</div>
<div class="ln" style="left:0;top:418.5px;width:1400px;background:#ededed">
</div>
<div class="ib" style="left:1207px;top:387.5px">
<svg style="left:4.7px;top:4.7px" width="10.6" height="10.6" viewBox="0 0 12 12" fill="none" stroke="#fff" stroke-width="1" stroke-linecap="round" stroke-linejoin="round">
<path d="M5.4 1.6H3A1.8 1.8 0 0 0 1.2 3.4V9A1.8 1.8 0 0 0 3 10.8H8.6A1.8 1.8 0 0 0 10.4 9V6.6"/>
<path d="M4.6 7.4L5 5.6L9.4 1.2A.9.9 0 0 1 10.8 2.6L6.4 7Z"/>
</svg>
</div>
<div class="ib" style="left:1233px;top:387.5px">
<svg style="left:4.7px;top:4.7px" width="10.6" height="10.6" viewBox="0 0 12 12" fill="none" stroke="#fff" stroke-width="1" stroke-linecap="round" stroke-linejoin="round">
<path d="M4 3.4V2.6A1.4 1.4 0 0 1 5.4 1.2H9.4A1.4 1.4 0 0 1 10.8 2.6V6.6A1.4 1.4 0 0 1 9.4 8H8.8"/>
<rect x="1.2" y="3.8" width="7.2" height="7.2" rx="1.6"/>
<path d="M4.8 5.6V9.2M3 7.4H6.6" stroke-width="1.2"/>
</svg>
</div>
<div class="ib" style="left:1259px;top:387.5px">
<svg style="left:4.9px;top:4.7px" width="10.6" height="10.6" viewBox="0 0 12 12" fill="none" stroke="#fff" stroke-width="1" stroke-linecap="round" stroke-linejoin="round">
<path d="M5.4 10.6H2V1.2H9.2V6"/>
<path d="M3.8 3.4H7.4M3.8 5.4H7.4M3.8 7.4H5.4"/>
<path d="M6.6 9.2L8 10.6L10.8 7.6"/>
</svg>
</div>
<div class="ibd" style="left:1284.5px;top:387.0px">
<svg style="left:4.7px;top:4.2px" width="10" height="11" viewBox="0 0 11 12" fill="none" stroke="#ff4d4f" stroke-width="1.1" stroke-linecap="round" stroke-linejoin="round">
<path d="M.8 2.8H10.2M3.8 2.6V1.4H7.2V2.6M2 3V10.8H9V3"/>
<path d="M4.5 5V8.8M6.5 5V8.8"/>
</svg>
</div>
<div class="ln" style="left:0;top:460.5px;width:1400px;background:#ededed">
</div>
<div class="ib" style="left:1207px;top:429.5px">
<svg style="left:4.7px;top:4.7px" width="10.6" height="10.6" viewBox="0 0 12 12" fill="none" stroke="#fff" stroke-width="1" stroke-linecap="round" stroke-linejoin="round">
<path d="M5.4 1.6H3A1.8 1.8 0 0 0 1.2 3.4V9A1.8 1.8 0 0 0 3 10.8H8.6A1.8 1.8 0 0 0 10.4 9V6.6"/>
<path d="M4.6 7.4L5 5.6L9.4 1.2A.9.9 0 0 1 10.8 2.6L6.4 7Z"/>
</svg>
</div>
<div class="ib" style="left:1233px;top:429.5px">
<svg style="left:4.7px;top:4.7px" width="10.6" height="10.6" viewBox="0 0 12 12" fill="none" stroke="#fff" stroke-width="1" stroke-linecap="round" stroke-linejoin="round">
<path d="M4 3.4V2.6A1.4 1.4 0 0 1 5.4 1.2H9.4A1.4 1.4 0 0 1 10.8 2.6V6.6A1.4 1.4 0 0 1 9.4 8H8.8"/>
<rect x="1.2" y="3.8" width="7.2" height="7.2" rx="1.6"/>
<path d="M4.8 5.6V9.2M3 7.4H6.6" stroke-width="1.2"/>
</svg>
</div>
<div class="ib" style="left:1259px;top:429.5px">
<svg style="left:4.9px;top:4.7px" width="10.6" height="10.6" viewBox="0 0 12 12" fill="none" stroke="#fff" stroke-width="1" stroke-linecap="round" stroke-linejoin="round">
<path d="M5.4 10.6H2V1.2H9.2V6"/>
<path d="M3.8 3.4H7.4M3.8 5.4H7.4M3.8 7.4H5.4"/>
<path d="M6.6 9.2L8 10.6L10.8 7.6"/>
</svg>
</div>
<div class="ibd" style="left:1284.5px;top:429.0px">
<svg style="left:4.7px;top:4.2px" width="10" height="11" viewBox="0 0 11 12" fill="none" stroke="#ff4d4f" stroke-width="1.1" stroke-linecap="round" stroke-linejoin="round">
<path d="M.8 2.8H10.2M3.8 2.6V1.4H7.2V2.6M2 3V10.8H9V3"/>
<path d="M4.5 5V8.8M6.5 5V8.8"/>
</svg>
</div>
<div class="ln" style="left:0;top:502.5px;width:1400px;background:#ededed">
</div>
<div class="ib" style="left:1207px;top:471.5px">
<svg style="left:4.7px;top:4.7px" width="10.6" height="10.6" viewBox="0 0 12 12" fill="none" stroke="#fff" stroke-width="1" stroke-linecap="round" stroke-linejoin="round">
<path d="M5.4 1.6H3A1.8 1.8 0 0 0 1.2 3.4V9A1.8 1.8 0 0 0 3 10.8H8.6A1.8 1.8 0 0 0 10.4 9V6.6"/>
<path d="M4.6 7.4L5 5.6L9.4 1.2A.9.9 0 0 1 10.8 2.6L6.4 7Z"/>
</svg>
</div>
<div class="ib" style="left:1233px;top:471.5px">
<svg style="left:4.7px;top:4.7px" width="10.6" height="10.6" viewBox="0 0 12 12" fill="none" stroke="#fff" stroke-width="1" stroke-linecap="round" stroke-linejoin="round">
<path d="M4 3.4V2.6A1.4 1.4 0 0 1 5.4 1.2H9.4A1.4 1.4 0 0 1 10.8 2.6V6.6A1.4 1.4 0 0 1 9.4 8H8.8"/>
<rect x="1.2" y="3.8" width="7.2" height="7.2" rx="1.6"/>
<path d="M4.8 5.6V9.2M3 7.4H6.6" stroke-width="1.2"/>
</svg>
</div>
<div class="ib" style="left:1259px;top:471.5px">
<svg style="left:4.9px;top:4.7px" width="10.6" height="10.6" viewBox="0 0 12 12" fill="none" stroke="#fff" stroke-width="1" stroke-linecap="round" stroke-linejoin="round">
<path d="M5.4 10.6H2V1.2H9.2V6"/>
<path d="M3.8 3.4H7.4M3.8 5.4H7.4M3.8 7.4H5.4"/>
<path d="M6.6 9.2L8 10.6L10.8 7.6"/>
</svg>
</div>
<div class="ibd" style="left:1284.5px;top:471.0px">
<svg style="left:4.7px;top:4.2px" width="10" height="11" viewBox="0 0 11 12" fill="none" stroke="#ff4d4f" stroke-width="1.1" stroke-linecap="round" stroke-linejoin="round">
<path d="M.8 2.8H10.2M3.8 2.6V1.4H7.2V2.6M2 3V10.8H9V3"/>
<path d="M4.5 5V8.8M6.5 5V8.8"/>
</svg>
</div>
<div class="a" style="left:1384px;top:0;width:16px;height:479px;background:rgba(0,0,0,.035)">
</div>
<div class="a" style="left:1388.7px;top:4.5px;width:6.2px;height:262px;border-radius:3px;background:#8a8a8a">
</div>
</div>
<div class="ln" style="left:194px;top:631px;width:1397px;background:#f0f0f0">
</div>
<div class="panel" style="left:187px;top:678.5px;width:1410px;height:215px">
</div>
<div class="ln" style="left:194px;top:726.5px;width:1396px;background:#efefef">
</div>
<div class="btn" style="left:1335px;top:691.5px;width:105px;height:25px">
</div>
<div class="btn" style="left:1448px;top:691.5px;width:134px;height:25px">
</div>
<svg style="left:1341px;top:698px" width="12" height="13" viewBox="0 0 12 14" fill="none" stroke="#fff" stroke-width="1.2" stroke-linecap="round" stroke-linejoin="round">
<rect x=".8" y="1.6" width="10.4" height="11.6" rx="1.6"/>
<path d="M3.4.8H8.6M3.2 5.4H8.8M3.2 8H8.8M3.2 10.6H5.6"/>
</svg>
<svg style="left:1452.5px;top:698.5px" width="14.5" height="12.6" viewBox="0 0 15 13" fill="#fff">
<path d="M.4 2A1.4 1.4 0 0 1 1.8.6H5L6.6 2.2H11.4A1.2 1.2 0 0 1 12.6 3.4V4.2H3.6A1.6 1.6 0 0 0 2.1 5.3L.4 10.6Z"/>
<path d="M3.2 5.2H14.2A.6.6 0 0 1 14.8 6L12.9 11.8A1 1 0 0 1 12 12.5H1.2A.5.5 0 0 1 .8 11.8L2.6 5.7A.7.7 0 0 1 3.2 5.2Z"/>
</svg>
<div class="t" style="left:12.0px;top:10.8px;font-size:13px;color:#141414;letter-spacing:0.25px;">JarveePro3 - Advanced Content Explorer</div>
<div class="t" style="left:263.5px;top:10.8px;font-size:13px;color:#6b6b6b;letter-spacing:0.46px;">v1.0.2.1</div>
<div class="t" style="left:48.1px;top:185.3px;font-size:15px;color:#141414;letter-spacing:0.20px;">Accounts</div>
<div class="t" style="left:48.1px;top:231.3px;font-size:15px;color:#141414;letter-spacing:0.21px;">Search Tools</div>
<div class="t" style="left:48.1px;top:277.3px;font-size:15px;color:#1677ff;letter-spacing:0.24px;">Generation</div>
<div class="t" style="left:218.9px;top:59.3px;font-size:13px;color:#fff;letter-spacing:0.29px;">Create Task</div>
<div class="t" style="left:326.3px;top:59.3px;font-size:13px;color:#fff;letter-spacing:0.27px;">Create Mixed Task</div>
<div class="t" style="left:474.8px;top:59.3px;font-size:13px;color:#fff;letter-spacing:0.19px;">Generate Keywords</div>
<div class="t" style="left:633.3px;top:59.3px;font-size:13px;color:#fff;letter-spacing:0.47px;">AI Template</div>
<div class="t" style="left:743.5px;top:59.3px;font-size:13px;color:#fff;letter-spacing:0.37px;">Tag List</div>
<div class="t" style="left:1431.0px;top:59.3px;font-size:13px;color:#fff;letter-spacing:0.38px;">Start Task</div>
<div class="t" style="left:1550.5px;top:59.3px;font-size:13px;color:#ff4d4f;letter-spacing:0.42px;">Stop</div>
<div class="t" style="left:221.9px;top:110.9px;font-size:13px;color:#14315c;letter-spacing:-0.38px;">All</div>
<div class="t" style="left:1383.0px;top:111.0px;font-size:13px;color:#1f1f1f;letter-spacing:0.33px;">Log visiable:</div>
<div class="t" style="left:1538.0px;top:111.0px;font-size:13px;color:#c4c4c4;letter-spacing:0.24px;">Delete</div>
<div class="t" style="left:214.5px;top:164.0px;font-size:13px;color:#1f1f1f;letter-spacing:0.00px;">#</div>
<div class="t" style="left:1398.8px;top:164.0px;font-size:13px;color:#1f1f1f;letter-spacing:0.36px;">Task Actions</div>
<div class="t" style="left:201.0px;top:642.6px;font-size:13px;color:#1f1f1f;letter-spacing:0.42px;">Total tasks: 10</div>
<div class="t" style="left:198.4px;top:697.3px;font-size:15px;color:#1f1f1f;letter-spacing:-0.60px;">Log</div>
<div class="t" style="left:201.0px;top:738.0px;font-size:13px;color:#bfbfbf;letter-spacing:0.47px;">Task log</div>
<div class="t" style="left:1355.0px;top:697.0px;font-size:13px;color:#fff;letter-spacing:0.29px;">Open log file</div>
<div class="t" style="left:1467.7px;top:697.0px;font-size:13px;color:#fff;letter-spacing:0.29px;">Open log location</div>
<div class="t" style="left:216.5px;top:205.9px;font-size:11.5px;color:#1f1f1f;letter-spacing:0.00px;">1</div>
<div class="t" style="left:216.5px;top:247.9px;font-size:11.5px;color:#1f1f1f;letter-spacing:0.00px;">2</div>
<div class="t" style="left:216.5px;top:289.9px;font-size:11.5px;color:#1f1f1f;letter-spacing:0.00px;">3</div>
<div class="t" style="left:216.5px;top:331.9px;font-size:11.5px;color:#1f1f1f;letter-spacing:0.00px;">4</div>
<div class="t" style="left:216.5px;top:373.9px;font-size:11.5px;color:#1f1f1f;letter-spacing:0.00px;">5</div>
<div class="t" style="left:216.5px;top:415.9px;font-size:11.5px;color:#1f1f1f;letter-spacing:0.00px;">6</div>
<div class="t" style="left:216.5px;top:457.9px;font-size:11.5px;color:#1f1f1f;letter-spacing:0.00px;">7</div>
<div class="t" style="left:216.5px;top:499.9px;font-size:11.5px;color:#1f1f1f;letter-spacing:0.00px;">8</div>
<div class="t" style="left:216.5px;top:541.9px;font-size:11.5px;color:#1f1f1f;letter-spacing:0.00px;">9</div>
<div class="t" style="left:213.0px;top:583.9px;font-size:11.5px;color:#1f1f1f;letter-spacing:-0.60px;">10</div>
<div class="a" style="left:254px;top:98px;width:1080px;height:720px;border-radius:8px;box-shadow:0 22px 50px 0 rgba(0,0,0,.38)">
</div>
<div class="a" style="left:254px;top:98px;width:1080px;height:720px;border-radius:8px;background:#fff;border:1px solid #a9a9a9;overflow:hidden">
<div class="a" style="left:0;top:0;width:1078px;height:32px;background:#efeff1">
</div>
</div>
<div class="a" style="left:1231.6px;top:113.5px;width:12.4px;height:2px;background:#111">
</div>
<div class="a" style="left:1270.4px;top:110.4px;width:11.2px;height:9.2px;border:1.4px solid #222;border-radius:1.5px">
</div>
<svg style="left:1309.5px;top:110.6px" width="9" height="9" viewBox="0 0 9 9" stroke="#111" stroke-width="1.25" stroke-linecap="round">
<path d="M.4.4L8.6 8.6M8.6.4L.4 8.6"/>
</svg>
<div class="ln" style="left:372px;top:143px;width:957px;background:#f0f0f0">
</div>
<div class="ln" style="left:351px;top:275px;width:978px;background:#f0f0f0">
</div>
<div class="ln" style="left:359px;top:587px;width:970px;background:#f0f0f0">
</div>
<div class="ln" style="left:258px;top:778px;width:576px;background:#f0f0f0">
</div>
<div class="a" style="left:388.5px;top:155px;width:407px;height:35.5px;border-radius:5px;background:#e4efff">
</div>
<div class="a" style="left:392px;top:159px;width:400px;height:27.8px;border:1.4px solid #2a7fff;border-radius:4px;background:#fff">
</div>
<div class="a" style="left:580.3px;top:165.5px;width:1px;height:14.5px;background:#111">
</div>
<div class="inp" style="left:894.7px;top:159.0px;width:171.1px;height:27.8px">
</div>
<svg style="left:1048.4px;top:167.3px" width="11" height="11" viewBox="0 0 11 11" fill="none" stroke="#222" stroke-width="1.1">
<circle cx="5.5" cy="5.5" r="4.6"/>
<circle cx="5.5" cy="5.5" r="2.3" fill="#222" stroke="none"/>
</svg>
<div class="inp" style="left:391.7px;top:196.1px;width:916.4px;height:27.8px">
</div>
<div class="a" style="left:393.2px;top:240.4px;width:13.6px;height:13.6px;box-shadow:inset 0 0 0 1.5px #cdcdcd;border-radius:50%;background:#fff">
</div>
<div class="a" style="left:539px;top:240.3px;width:13.6px;height:13.6px;box-shadow:inset 0 0 0 4.5px #1677ff;border-radius:50%;background:#fff">
</div>
<div class="a" style="left:610.7px;top:240.4px;width:13.6px;height:13.6px;box-shadow:inset 0 0 0 1.5px #cdcdcd;border-radius:50%;background:#fff">
</div>
<div class="ln" style="left:256px;top:341px;width:1076px;background:#ececec">
</div>
<div class="a" style="left:259px;top:318.5px;width:70.5px;height:23.5px;border:1px solid #e6e6e6;border-bottom:1px solid #fff;border-radius:5px 5px 0 0;background:#fff">
</div>
<div class="inp" style="left:390.2px;top:354.2px;width:395.6px;height:27.8px">
</div>
<svg style="left:765px;top:363.7px" width="12.6" height="7.8" viewBox="0 0 12.6 7.8" fill="none" stroke="#b3b3b3" stroke-width="1.9" stroke-linecap="round" stroke-linejoin="round">
<path d="M1 1L6.3 6.6L11.6 1"/>
</svg>
<div class="inp" style="left:390.2px;top:390.5px;width:395.6px;height:27.8px">
</div>
<svg style="left:765px;top:400px" width="12.6" height="7.8" viewBox="0 0 12.6 7.8" fill="none" stroke="#b3b3b3" stroke-width="1.9" stroke-linecap="round" stroke-linejoin="round">
<path d="M1 1L6.3 6.6L11.6 1"/>
</svg>
<div class="inp" style="left:390.2px;top:429.0px;width:928.9px;height:28.0px">
</div>
<div class="a" style="left:394px;top:433.4px;width:191.8px;height:19px;border-radius:3px;background:#f3f3f3">
</div>
<svg style="left:1302.2px;top:440.2px" width="9.4" height="5.6" viewBox="0 0 9.4 5.6" fill="none" stroke="#8c8c8c" stroke-width="1.3" stroke-linecap="round" stroke-linejoin="round">
<path d="M.8.8L4.7 4.6L8.6.8"/>
</svg>
<div class="inp" style="left:390.2px;top:465.7px;width:928.9px;height:64.6px">
</div>
<div class="a" style="left:394px;top:540.2px;width:112px;height:25.4px;border-radius:4px;background:#f4f4f4">
</div>
<div class="inp" style="left:722.9px;top:603.2px;width:87.1px;height:23.6px">
</div>
<div class="a" style="left:275px;top:644px;width:12.2px;height:12.2px;border-radius:2.5px;background:#1a6fe8">
</div>
<svg style="left:275px;top:644px" width="12.2" height="12.2" viewBox="0 0 12 12" fill="none" stroke="#fff" stroke-width="1.8" stroke-linecap="round" stroke-linejoin="round">
<path d="M2.6 6.4L4.9 8.8L9.4 3.2"/>
</svg>
<div class="a" style="left:274.3px;top:678.3px;width:13.4px;height:13.4px;border-radius:3px;box-shadow:inset 0 0 0 1.4px #cbcbcb;background:#fff">
</div>
<div class="inp dis" style="left:499.2px;top:706.0px;width:86.6px;height:27.8px">
</div>
<div class="inp dis" style="left:623.1px;top:706.0px;width:86.6px;height:27.8px">
</div>
<div class="inp dis" style="left:499.2px;top:740.1px;width:86.6px;height:27.8px">
</div>
<div class="inp dis" style="left:623.1px;top:740.1px;width:86.6px;height:27.8px">
</div>
<svg style="left:569.1px;top:749px" width="10" height="10" viewBox="0 0 10 10" fill="none" stroke="#bdbdbd" stroke-width="1" stroke-linecap="round">
<circle cx="5" cy="5" r="4.3"/>
<path d="M5 2.6V5.2L6.6 6.2"/>
</svg>
<svg style="left:693px;top:749px" width="10" height="10" viewBox="0 0 10 10" fill="none" stroke="#bdbdbd" stroke-width="1" stroke-linecap="round">
<circle cx="5" cy="5" r="4.3"/>
<path d="M5 2.6V5.2L6.6 6.2"/>
</svg>
<div class="btn" style="left:269px;top:784px;width:70px;height:28px;border-radius:3px">
</div>
<div class="a" style="left:346.5px;top:784px;width:69px;height:28px;border:1px solid #d9d9d9;border-radius:3px;background:#fff;box-shadow:0 2px 0 rgba(0,0,0,.02)">
</div>
<div class="t" style="left:264.4px;top:106.8px;font-size:13px;color:#1f1f1f;letter-spacing:0.37px;">Create Task</div>
<div class="t" style="left:259.0px;top:135.8px;font-size:13px;color:#141414;letter-spacing:0.37px;">Basic Information</div>
<div class="t" style="left:272.5px;top:164.8px;font-size:13px;color:#1f1f1f;letter-spacing:0.39px;">Task name</div>
<div class="t" style="left:399.0px;top:164.8px;font-size:13px;color:#1f1f1f;letter-spacing:0.61px;">Facebook_Search Page Fan</div>
<div class="t" style="left:831.2px;top:164.8px;font-size:13px;color:#1f1f1f;letter-spacing:0.21px;">Tags</div>
<div class="t" style="left:902.3px;top:164.8px;font-size:13px;color:#bfbfbf;letter-spacing:0.27px;">Select tag</div>
<div class="t" style="left:272.5px;top:201.8px;font-size:13px;color:#1f1f1f;letter-spacing:0.27px;">Description</div>
<div class="t" style="left:399.0px;top:201.8px;font-size:13px;color:#bfbfbf;letter-spacing:0.35px;">Task description</div>
<div class="t" style="left:272.5px;top:238.5px;font-size:13px;color:#1f1f1f;letter-spacing:0.20px;">Type</div>
<div class="t" style="left:412.0px;top:238.5px;font-size:13px;color:#1f1f1f;letter-spacing:0.32px;">Search + Generate</div>
<div class="t" style="left:558.0px;top:238.5px;font-size:13px;color:#1f1f1f;letter-spacing:0.08px;">Search</div>
<div class="t" style="left:629.9px;top:238.5px;font-size:13px;color:#1f1f1f;letter-spacing:0.17px;">Generate</div>
<div class="t" style="left:259.0px;top:267.7px;font-size:13px;color:#141414;letter-spacing:0.12px;">Search source</div>
<div class="t" style="left:267.2px;top:322.7px;font-size:13px;color:#1677ff;letter-spacing:0.16px;">Source 1</div>
<div class="t" style="left:272.3px;top:360.0px;font-size:13px;color:#1f1f1f;letter-spacing:0.38px;">Platform</div>
<div class="t" style="left:397.1px;top:360.0px;font-size:13px;color:#1f1f1f;letter-spacing:0.56px;">Facebook</div>
<div class="t" style="left:272.3px;top:395.8px;font-size:13px;color:#1f1f1f;letter-spacing:0.26px;">Search type</div>
<div class="t" style="left:397.1px;top:395.8px;font-size:13px;color:#1f1f1f;letter-spacing:0.75px;">Search Followings</div>
<div class="t" style="left:272.3px;top:434.9px;font-size:13px;color:#1f1f1f;letter-spacing:0.10px;">Run accounts</div>
<div class="t" style="left:398.5px;top:435.0px;font-size:13px;color:#1f1f1f;letter-spacing:0.37px;">dwzdljjgn@protonmail.com</div>
<div class="t" style="left:569.5px;top:435.5px;font-size:12px;color:#555;letter-spacing:0.00px;">×</div>
<div class="t" style="left:272.3px;top:470.8px;font-size:13px;color:#1f1f1f;letter-spacing:0.28px;">Account links</div>
<div class="t" style="left:397.1px;top:472.8px;font-size:13px;color:#1f1f1f;letter-spacing:1.20px;">https://www.facebook.com/jarveeproadmin/</div>
<div class="t" style="left:272.5px;top:545.0px;font-size:13px;color:#1f1f1f;letter-spacing:0.31px;">Filter options</div>
<div class="t" style="left:400.8px;top:545.0px;font-size:13px;color:#bfbfbf;letter-spacing:0.39px;">No filter options</div>
<div class="t" style="left:259.0px;top:580.0px;font-size:13px;color:#141414;letter-spacing:0.43px;">Monitor Setting</div>
<div class="t" style="left:272.5px;top:606.7px;font-size:13px;color:#1f1f1f;letter-spacing:0.41px;">Search Results per Input (keyword, user link, group link, or post link)</div>
<div class="t" style="left:730.9px;top:606.7px;font-size:13px;color:#1f1f1f;letter-spacing:0.55px;">100</div>
<div class="t" style="left:293.4px;top:642.0px;font-size:13px;color:#1f1f1f;letter-spacing:0.24px;">Save all results</div>
<div class="t" style="left:293.4px;top:676.8px;font-size:13px;color:#1f1f1f;letter-spacing:0.39px;">Enable real-time monitoring</div>
<div class="t" style="left:294.2px;top:712.1px;font-size:13px;color:#1f1f1f;letter-spacing:0.40px;">Monitoring interval (Minutes)</div>
<div class="t" style="left:507.1px;top:712.1px;font-size:13px;color:#bfbfbf;letter-spacing:-0.07px;">10</div>
<div class="t" style="left:599.5px;top:712.5px;font-size:13px;color:#1f1f1f;letter-spacing:0.00px;">~</div>
<div class="t" style="left:631.0px;top:712.1px;font-size:13px;color:#bfbfbf;letter-spacing:-0.07px;">15</div>
<div class="t" style="left:294.2px;top:745.9px;font-size:13px;color:#1f1f1f;letter-spacing:0.37px;">Active monitoring hours</div>
<div class="t" style="left:507.1px;top:745.9px;font-size:13px;color:#bfbfbf;letter-spacing:0.84px;">00:00</div>
<div class="t" style="left:599.5px;top:746.2px;font-size:13px;color:#1f1f1f;letter-spacing:0.00px;">~</div>
<div class="t" style="left:631.0px;top:745.9px;font-size:13px;color:#bfbfbf;letter-spacing:0.94px;">23:59</div>
<div class="t" style="left:289.7px;top:789.9px;font-size:13px;color:#fff;letter-spacing:-0.28px;">Save</div>
<div class="t" style="left:361.4px;top:789.9px;font-size:13px;color:#1f1f1f;letter-spacing:-0.01px;">Cancel</div>
</body>
</html>
